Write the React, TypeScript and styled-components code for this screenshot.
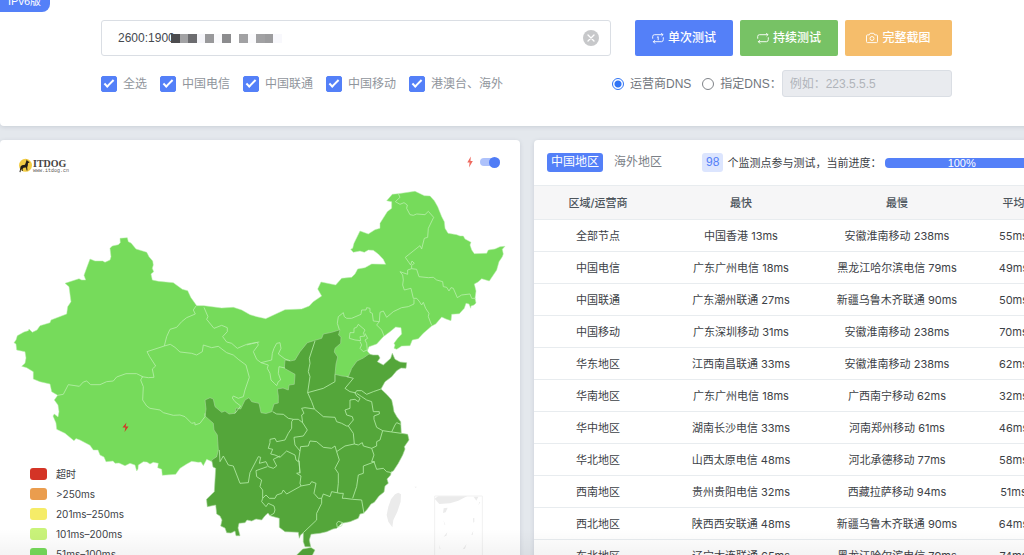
import React, { useState } from "react";
import styled, { createGlobalStyle } from "styled-components";

const GlobalStyle = createGlobalStyle`
  *, *::before, *::after { box-sizing: border-box; }
  body {
    margin: 0;
    background: #e4e8ed;
    color: #3c4146;
    font-family: "Liberation Sans", "Noto Sans CJK SC", sans-serif;
    font-size: 12px;
    line-height: 16px;
  }
  button, input { font: inherit; }
`;

const Page = styled.div`
  position: relative;
  height: 100vh;
  overflow: hidden;
`;

const Content = styled.div`
  min-width: 1053px;
  display: flex;
  flex-direction: column;
  gap: 14px;
`;

const BottomFade = styled.div`
  position: absolute;
  inset: auto 0 0 0;
  height: 26px;
  background: linear-gradient(rgba(0, 0, 0, 0), rgba(0, 0, 0, 0.045));
  pointer-events: none;
`;

const Card = styled.section`
  position: relative;
  background: #fff;
  border-radius: 4px;
  box-shadow: 0 1px 4px rgba(60, 75, 100, 0.16);
`;

const SearchCard = styled(Card)`
  border-radius: 0 0 4px 4px;
  padding: 20px 24px 29px;
`;

const VersionBadge = styled.span`
  position: absolute;
  left: 0;
  top: -8px;
  height: 20px;
  padding: 1px 9px 0 8px;
  border-radius: 0 0 8px 0;
  background: #5480f8;
  color: #fff;
  font-size: 11px;
`;

const Form = styled.form`
  max-width: 851px;
  margin: 0 auto;
  display: flex;
  flex-direction: column;
  gap: 14px;
`;

const FormRow = styled.div<{ $gap: number }>`
  display: flex;
  align-items: center;
  gap: ${(p) => p.$gap}px;
`;

const AddressField = styled.div`
  position: relative;
  flex: 1;
`;

const AddressInput = styled.input`
  display: block;
  width: 100%;
  height: 36px;
  padding: 0 40px 0 16px;
  border: 1px solid #dadee4;
  border-radius: 3px;
  color: #45494f;
  outline: none;
`;

const Mask = styled.svg`
  position: absolute;
  left: 70px;
  top: 14px;
`;

const ClearButton = styled.button`
  position: absolute;
  right: 12px;
  top: 10px;
  width: 16px;
  height: 16px;
  padding: 0;
  border: 0;
  border-radius: 50%;
  background: #c7c8ca;
  svg { display: block; }
`;

const ButtonGroup = styled.div`
  display: flex;
  gap: 7px;
`;

const ActionButton = styled.button<{ $color: string; $wide?: boolean }>`
  display: flex;
  align-items: center;
  justify-content: center;
  gap: 4px;
  width: ${(p) => (p.$wide ? 107 : 98)}px;
  height: 36px;
  padding: 0;
  border: 0;
  border-radius: 2px;
  background: ${(p) => p.$color};
  color: #fff;
  font-weight: 500;
`;

const Options = styled.div`
  flex: 1;
  display: flex;
  gap: 13px;
`;

const CheckLabel = styled.label`
  display: flex;
  align-items: center;
  gap: 6px;
  color: #90959c;
`;

const CheckBox = styled.input`
  appearance: none;
  width: 16px;
  height: 16px;
  margin: 0;
  border: 1px solid #5480f8;
  border-radius: 2px;
  display: grid;
  place-items: center;
  &:checked { background: #5480f8; }
  &:checked::before {
    content: "";
    width: 10px;
    height: 5px;
    margin-top: -3px;
    border: solid #fff;
    border-width: 0 0 2px 2px;
    transform: rotate(-45deg);
  }
`;

const DnsGroup = styled.div`
  display: flex;
  align-items: center;
  width: 340px;
`;

const RadioLabel = styled.label<{ $last?: boolean }>`
  display: flex;
  align-items: center;
  gap: 6px;
  margin-right: ${(p) => (p.$last ? 0 : 11)}px;
  color: #70757c;
  white-space: nowrap;
`;

const Radio = styled.input`
  appearance: none;
  width: 12px;
  height: 12px;
  margin: 0;
  border: 1px solid #7f8388;
  border-radius: 50%;
  &:checked {
    border-color: #3074f5;
    background: radial-gradient(circle, #3074f5 3px, #fff 4px);
  }
`;

const DnsInput = styled.input`
  flex: 1;
  min-width: 0;
  height: 27px;
  padding: 0 7px;
  border: 1px solid #dadee4;
  border-radius: 3px;
  background: #e9ebef;
  &::placeholder { color: #b0b4ba; opacity: 1; }
`;

const Columns = styled.main`
  display: grid;
  grid-template-columns: 520fr 519fr;
  column-gap: 14px;
  align-items: start;
`;

const MapSvg = styled.svg`
  display: block;
  width: 100%;
`;

const Logo = styled.svg`
  position: absolute;
  left: 18px;
  top: 16px;
`;

const MapSwitch = styled.label`
  position: absolute;
  right: 20px;
  top: 16px;
  display: flex;
  align-items: center;
  gap: 7px;
  svg { display: block; }
`;

const Switch = styled.input`
  appearance: none;
  width: 20px;
  height: 8px;
  margin: 0;
  border-radius: 4px;
  background: #d5d8dd;
  display: flex;
  align-items: center;
  &::before {
    content: "";
    width: 11px;
    height: 11px;
    flex: none;
    border-radius: 50%;
    background: #9da2aa;
  }
  &:checked {
    background: #aec2fb;
    justify-content: flex-end;
  }
  &:checked::before { background: #4f7cf6; }
`;

const Legend = styled.ul`
  position: absolute;
  left: 30px;
  top: 324px;
  margin: 0;
  padding: 0;
  list-style: none;
  font-family: Inter, "Noto Sans CJK SC", sans-serif;
  font-size: 10px;
`;

const LegendItem = styled.li<{ $color: string }>`
  display: flex;
  align-items: center;
  gap: 9px;
  height: 20px;
  &::before {
    content: "";
    width: 17px;
    height: 12px;
    border-radius: 3px;
    background: ${(p) => p.$color};
  }
`;

const PanelHead = styled.header`
  display: flex;
  align-items: center;
  height: 45px;
  padding: 0 15px 0 13px;
`;

const Tab = styled.button<{ $active?: boolean }>`
  height: 19px;
  padding: 0 4px;
  border: 0;
  border-radius: 3px;
  background: ${(p) => (p.$active ? "#5480f8" : "transparent")};
  color: ${(p) => (p.$active ? "#fff" : "#7b8087")};
  line-height: 19px;
`;

const Tabs = styled.nav`
  display: flex;
  gap: 7px;
  margin-right: 36px;
`;

const Count = styled.span`
  padding: 0 4px;
  margin-right: 4px;
  border-radius: 3px;
  background: #dce5fe;
  color: #5480f8;
  line-height: 19px;
`;

const StatusText = styled.span`
  font-size: 11px;
  white-space: nowrap;
  margin-right: 4px;
`;

const Progress = styled.div`
  flex: 1;
  height: 10px;
  border-radius: 4px;
  background: #5480f8;
  color: #fff;
  font-size: 11px;
  line-height: 10px;
  text-align: center;
`;

const Table = styled.table`
  width: 100%;
  table-layout: fixed;
  border-collapse: separate;
  border-spacing: 0;
  font-family: Inter, "Noto Sans CJK SC", sans-serif;
  font-size: 11px;
  text-align: center;
`;

const Th = styled.th<{ $width: string }>`
  width: ${(p) => p.$width};
  height: 35px;
  padding: 0;
  border: solid #e8ecef;
  border-width: 1px 0;
  background: #f6f6f7;
  color: #4d555c;
  font-weight: 500;
`;

const Td = styled.td`
  height: 32px;
  padding: 0;
  border-bottom: 1px solid #e8ecef;
  white-space: nowrap;
`;

const ISPS = ["全选", "中国电信", "中国联通", "中国移动", "港澳台、海外"];

const LEVELS = [
  ["超时", "#d43426"],
  [">250ms", "#ea9d4e"],
  ["201ms–250ms", "#f5ec68"],
  ["101ms–200ms", "#c9f37a"],
  ["51ms–100ms", "#76da5a"],
];

const COLUMNS = [
  ["区域/运营商", "128px"],
  ["最快", "158px"],
  ["最慢", "154px"],
  ["平均", "auto"],
];

const ROWS = [
  ["全部节点", "中国香港 13ms", "安徽淮南移动 238ms", "55ms"],
  ["中国电信", "广东广州电信 18ms", "黑龙江哈尔滨电信 79ms", "49ms"],
  ["中国联通", "广东潮州联通 27ms", "新疆乌鲁木齐联通 90ms", "50ms"],
  ["中国移动", "广东深圳移动 31ms", "安徽淮南移动 238ms", "70ms"],
  ["华东地区", "江西南昌联通 33ms", "安徽淮南移动 238ms", "62ms"],
  ["华南地区", "广东广州电信 18ms", "广西南宁移动 62ms", "32ms"],
  ["华中地区", "湖南长沙电信 33ms", "河南郑州移动 61ms", "46ms"],
  ["华北地区", "山西太原电信 48ms", "河北承德移动 77ms", "58ms"],
  ["西南地区", "贵州贵阳电信 32ms", "西藏拉萨移动 94ms", "51ms"],
  ["西北地区", "陕西西安联通 48ms", "新疆乌鲁木齐联通 90ms", "64ms"],
  ["东北地区", "辽宁大连联通 65ms", "黑龙江哈尔滨电信 79ms", "74ms"],
];

/* Regions answering in 51–100 ms */
const NORTH_WEST =
  "M65 283.3L72 281 79 278.7 81.7 280 85.7 280 84 275.3 87 267 90 259 95 261 102.7 261 105 262.3 110 260 111 256.7 110 248.3 112.3 246 118.3 244.7 120.3 242.7 120 238.3 127.3 237.7 128.3 241.7 131 243 133.3 245.7 136 249 141.7 250.7 146.7 252.3 149 256.7 152.7 261 153.3 265 152.3 268.3 153.7 271.7 151 274 152.3 280 158.3 281.3 173.3 282.7 182.3 289.3 187.7 290.7 190.7 297.3 196.7 305.7 204 305.7 221.7 308 233.3 307.3 241.7 310 250 314.7 256.7 316.7 265.7 318.7 285 309.7 301.7 309 309.3 306 313.3 301.7 321.7 296 317.7 289 321 282 335.7 285 341.7 278.3 351.7 277.3 355 274 357.7 269 365 267.7 371.7 264 385.7 264.3 383.3 259.3 378.3 254 373.3 250.3 368.3 250 364.3 252.3 360 251 353.3 252.3 350.7 249.3 352.7 248.3 354 243.3 360 231 368.3 234 375 229.7 380 228.3 380 223.3 387.3 211.7 391.7 208.3 391.7 201.7 386.7 200.7 392.3 194.3 398.3 193.7 415 191.3 424.3 195.7 430 196 434.3 200.7 437.7 206.7 441.7 216.7 444.3 221.7 445 228.3 448 233.3 456.7 234.7 460 236 463.3 236 465 239 471 242.3 470 245 471.7 250 474.3 253.7 486.7 253.3 488.3 250 495 249 500 246.7 505 246.3 502.3 249.3 503.3 254 502.3 256.7 499 261.7 496.7 270 489.3 281 481.7 278.7 478 282 474.3 284 476 291 475 298.3 476 303 474 305 471 306 470.7 308.3 469 304 466 303.3 464.3 308.3 459.3 313.7 451.7 314.3 451 320.7 446 319 441.7 317 435.7 324 431.7 326 423.3 333.3 418.3 338.7 412.3 340 410 345.7 401.7 346 396.7 349.3 394 348.3 395 345 394 343.3 397.7 338.3 401.7 334 401 327.7 395.7 327 390 331.7 383.3 336.7 376.7 344 369 346.7 367.3 351 370.7 355 350 380 300 390 270 430 230 440 219 453 213.3 462.3 206.7 459.3 203.3 465.7 201 462 198.3 462.3 191.7 461.3 186.7 464 180 468.3 175.7 474.3 162.3 475.3 161.7 469.3 157.7 467.7 158.3 463.3 153.3 462.3 150 464 147 462 143.3 461.7 138.3 465 138 469 136.7 471 135 465 130 463.3 125 465.7 119 463 115 463.3 113 461 106 461.7 104 457 100 455 98 450 93.3 450 90 445.3 80 440 76 438.5 74 440.7 65 433.3 56.7 429.3 56 423 53 416 54.3 414 58 417 59 411.7 58 405 54.3 400 57.7 395.3 51.7 391.7 50 384 40 381.7 33.3 379 33.3 371.7 26.7 367.7 21.7 366.3 25 363.3 26 358 25 351.7 16.7 350 16 344 14 342.7 16 340 17.3 335.7 24 332 28.3 330.7 29 329 32.3 332.3 37 330 40 325.7 50 322.7 51 320 66.7 314 67.7 306.7 71 301.7 69 286.7Z";

/* Regions answering in 50 ms or less */
const SOUTH_EAST =
  "M205 400L210 397.7 213.3 399 215 406.7 221.7 412.3 225 411 229 414 235 413.3 236 408 240.7 409 245 400 249 397.7 251.7 401.7 259 403.3 261 412.7 266 413.5 271.7 411.7 274 404 278.3 403 278.3 396 277.3 389 283 388 288.3 390 289 385 294.3 384.3 295 374.3 284.3 368.3 285 360 290 361 295 360 300 351.7 307.3 342.7 314.3 340.5 321.7 338.3 323.3 334 331.7 332.3 340 329.7 338.5 335 341 337 340.7 343.3 335 348.3 334.3 352 337.7 357 336 364 335 374.3 342 376 348.3 376.7 351.7 368.3 357 361 363.3 358 369 354 373 355 378.3 355 380 358 377.3 361.7 383.3 365 390.7 358.3 392.3 353.3 395 359.3 400 362 406.7 362.7 406 368.3 401 368 396.7 370.7 391.7 376.7 385 381.7 381 389 387.3 395 391.7 400 393 406 394 411.7 397 417 400.7 421.7 401.3 433.3 407.7 434.3 409 440 404.3 446.7 405 449 402.7 455 398.3 463.3 393.3 471 391 472 390.7 475 387 479 388.3 483.3 385 486 384 492 379 496 374.3 502.3 371 504 366.7 510 363.3 513.3 360 514 358.3 518.3 350 521.7 341.7 523.3 336.7 528.3 333 529 326.7 531.7 320 533.3 311 534.3 309.3 540 310.7 546.7 305 546.7 303.3 541.7 303.3 532.7 300.5 535 299.3 538.3 298.3 532.3 285 531.7 279.3 527.3 279.3 518.3 270 515.7 268 513 265 515.7 261.7 520 256 519 251.7 521 247 520 245 522.7 239 523.3 238 528 240 535.7 236 535.7 235 531 231 533 226.7 532.7 225 528 220.7 526 222 520 220 516 216.7 514 215.7 505 207.3 506.7 206.5 499.3 214.3 491.7 215 480 215.7 468.3 213 467 211.7 460 216.7 456.7 218.3 450 217.3 435 214 430 213.3 423.3 205 416 206 409Z";

const BORDERS = [
  {
    origin: "translate(0 300) scale(.3333)",
    d: "M588 18L580 30 586 42 560 53 545 65 530 82 510 88 500 110 493 138 441 155 449 170 467 198 457 207 462 232 445 233 425 230M173 286L190 283 205 254 238 259 250 246 260 243 272 254 300 254 320 245 340 243 350 231 378 221 410 221 428 230 422 240 430 260 428 300 440 318 450 325 480 330 490 338 520 346 540 345 555 350 575 370 585 368 585 375 600 370 615 350 615 340M493 138L511 133 525 142 540 156 575 160 590 165 607 155 610 135 635 143 655 139 680 158 700 165 715 178 738 195 748 232 735 270 730 290 715 295 700 288 697 294 705 305 722 318 705 340M612 22L624 50 620 58 642 85 665 76 682 83 682 95 668 110 680 126 695 130 712 145 740 133 755 130 778 126",
  },
  {
    origin: "translate(180 340) scale(.3333)",
    d: "M200 15L232 7 235 15 220 35 230 58 243 68 265 75 262 85 270 100 273 120 283 130 290 137 295 125 302 120 295 100 297 80 315 84M243 68L275 60 277 40 282 25 290 10 300 8 303 25 295 42 315 57 330 62M405 3L388 55 390 70 385 95 390 110 383 158 430 145 465 125 465 103M383 158L395 185 403 207 375 203 365 205 372 220 365 225 368 248M278 215L290 222 310 223 325 235 340 238 355 238 368 248 382 270 370 288 342 292 345 315 360 333 362 320 385 318 390 303 410 305 430 322 455 325 465 318 470 335 478 360 465 385 475 400 475 430 472 458M403 207L430 230 465 232 470 245 485 250 500 258 505 258 520 240 517 230 500 225 495 210 510 205 510 180 525 178 535 185 540 175 530 168 525 158 510 155 495 145 520 115 500 110M525 160L530 152 545 152 560 163 580 155 603 147M530 160L545 170 560 180 575 185 580 215 598 215 598 222 582 228 582 238 590 262 608 272 635 276 645 255 650 248 662 253M635 276L664 280M608 272L600 300 590 305 590 318 575 325 550 318 547 308 535 315 523 312 495 318 470 335M505 258L520 280 523 312M340 238L335 245 335 265 325 280 315 300 290 305 285 295 270 298 270 308 265 325 278 328 272 342 285 345 300 352 320 333 345 345 348 360 355 365 360 333M118 330L120 365 130 348 145 375 160 378 180 430 205 428 210 398 235 350 242 352 238 370 258 365 265 380 280 385 290 378 280 358 300 348M262 380L228 392 230 410 245 420 240 440 248 450 248 475 258 465 268 475 285 475 290 465 305 460 310 450 320 462 363 438 360 430 363 408 350 400 360 398 357 362M363 438L390 433 395 425 408 430 402 460 415 475 425 475 430 462 450 470 455 455 480 460 490 460 487 475 495 475 518 478 545 480 552 520M248 475L245 485 258 500 265 490 282 498 285 510 282 520 270 527M425 475L425 490 410 520 410 540 370 578M518 475L530 440 535 405 550 400 550 378 585 365M575 325L582 345 575 365 582 365 590 388 610 385 620 395 635 398M470 550L475 544 488 548 485 558 472 562ZM357 362L360 400",
  },
  {
    origin: "translate(250 180) scale(.3333)",
    d: "M445 41L450 52 436 65 450 73 462 68 472 75 470 85 480 104 490 106 500 102 525 104 535 94 551 112 535 145 533 172 523 175 515 207 510 197 466 232 482 255 486 243 493 250 485 256 485 266 500 268 507 290 535 293 550 292 560 300 578 305 580 320 590 322 597 333 603 323 610 325 622 353 635 345 660 342 665 355 678 355M485 266L473 270 473 283 450 275 458 285 460 300 458 315 463 330 483 325 490 355 500 355 507 363 515 375 520 367 527 385 537 400 535 410 545 436M492 358L492 372 475 380 455 383 430 395 410 412 400 393 390 397 388 425 380 435 395 450 402 468M388 425L370 423 367 400 360 397 360 385 350 383 348 390 335 390 333 403 305 415 290 415 283 410 280 398 265 410 262 430 268 449M315 480L298 475 300 458 312 458 312 445 320 442 325 433 345 450 340 460 345 468 330 470 332 482ZM345 460L353 475 345 480 350 490 352 510 340 515 330 505 335 495 330 485",
  },
];

function ChinaMap() {
  return (
    <MapSvg viewBox="0 140 520 470" role="img" aria-label="中国地图">
      <g stroke="#b9efac" strokeLinejoin="round">
        <path d={NORTH_WEST} fill="#76db5b" strokeWidth=".5" />
        <path d={SOUTH_EAST} fill="#54a63a" stroke="#a6d69a" strokeWidth=".6" />
        <path d="M311 547.5L315 550 312 556 304 566 296 566 292 560 296.700 555 302.700 549Z" fill="#54a63a" strokeWidth=".5" />
        {BORDERS.map((b) => (
          <path key={b.origin} transform={b.origin} d={b.d} fill="none" strokeWidth="2.400" />
        ))}
      </g>
      <g transform="translate(380 440) scale(.3333)" fill="#ebebeb">
        <path d="M45 163L55 158 63 163 62 185 52 215 40 240 37 262 25 245 20 225 25 200 33 178Z" />
        <path d="M164 176L175 168 262 168 235 182 210 190 178 192Z" />
        <path d="M281 170l14 0-6 12zM191 205l12-2-6 14-8 2zM279 235l4-1 0 12-3 2zM298 186l3 0-6 10zM190 240l6 14-2 1zM191 290l11-13-3 10zM274 284l6-12-2 13zM177 314l5 14-3-2zM248 328l12-17-5 15zM103 140l7 0-2 4z" />
        <path d="M164 490V168H307V490" fill="none" stroke="#f1f1f1" strokeWidth="3" />
      </g>
      <path d="M126.500 422.500l-4 5h3l-1 4.500 4-5.500h-3z" fill="#d43426" />
    </MapSvg>
  );
}

function ItdogLogo() {
  return (
    <Logo width="52" height="18" viewBox="0 0 52 18" role="img" aria-label="ITDOG">
      <circle cx="7.500" cy="9.300" r="6.500" fill="#f3cd45" />
      <path d="M8.800 3.500L9.600 5 11.500 5.900 11.200 6.800 10 7 9.800 9.500 9.200 11.500 9.500 14.500 8.600 14.500 8 11.500 5.500 11.800 4.600 13 4.800 15 3.900 15 3.500 13 2.800 14 2.500 16.300 1.500 16 2.200 12.500 2.600 10.500 4 9.300 7 8.800 7.900 6.200Z" fill="#221d18" />
      <text x="15" y="11" fontFamily="Liberation Serif, serif" fontWeight="bold" fontSize="10" fill="#47433f">ITDOG</text>
      <text x="15" y="16" fontFamily="Liberation Mono, monospace" fontSize="5" fill="#5f5b57">www.itdog.cn</text>
    </Logo>
  );
}

function LoopIcon({ once }: { once?: boolean }) {
  return (
    <svg width="12" height="12" viewBox="0 0 12 12" fill="none" stroke="#fff" strokeWidth=".9" strokeLinecap="round" strokeLinejoin="round">
      <path d="M.7 6.300V4.500Q.7 2.700 2.500 2.700H10.900L9.500 1.300M11.300 5.700V7.500Q11.300 9.700 9.500 9.700H1.400L2.800 11.200M10.900 2.700L9.800 3.800M1.400 9.700L2.600 8.500" />
      {once && <path d="M5.300 5.200L6.200 4.700V7.800" />}
    </svg>
  );
}

function CameraIcon() {
  return (
    <svg width="12" height="12" viewBox="0 0 12 12" fill="none" stroke="#fff" strokeWidth=".9" strokeLinejoin="round">
      <path d="M1.500 2.900H3.200L4.200 1.300H7.800L8.800 2.900H10.500Q11.500 2.900 11.500 3.900V9.600Q11.500 10.600 10.500 10.600H1.500Q.5 10.600 .5 9.600V3.900Q.5 2.900 1.500 2.900Z" />
      <circle cx="6" cy="6.500" r="2" />
    </svg>
  );
}

const MASK_BLOCKS: [number, number, string][] = [
  [0, 9, "#4c4c4f"], [9, 8, "#a2a2a4"], [17, 9, "#6c6c6f"], [26, 8, "#f5f5f9"],
  [34, 9, "#99999b"], [43, 8, "#fafafc"], [51, 9, "#8c8c8e"], [68, 9, "#a1a1a3"],
  [77, 8, "#fafafc"], [85, 9, "#a1a1a3"], [94, 8, "#9c9c9e"], [102, 9, "#f8f8fc"],
];

export default function App() {
  const [address, setAddress] = useState("2600:1900");
  return (
    <Page>
      <GlobalStyle />
      <Content>
        <SearchCard>
          <VersionBadge>IPv6版</VersionBadge>
          <Form onSubmit={(e) => e.preventDefault()}>
            <FormRow $gap={24}>
              <AddressField>
                <AddressInput aria-label="IPv6 地址" value={address} onChange={(e) => setAddress(e.target.value)} />
                <Mask width="111" height="9" aria-hidden="true">
                  {MASK_BLOCKS.map(([x, w, c]) => (
                    <rect key={x} x={x} width={w} height="9" fill={c} />
                  ))}
                </Mask>
                <ClearButton type="button" aria-label="清除" onClick={() => setAddress("")}>
                  <svg width="16" height="16" viewBox="0 0 16 16" stroke="#fff" strokeWidth="1.300" strokeLinecap="round">
                    <path d="M5 5L11 11M11 5L5 11" />
                  </svg>
                </ClearButton>
              </AddressField>
              <ButtonGroup>
                <ActionButton type="button" $color="#5480f8"><LoopIcon once />单次测试</ActionButton>
                <ActionButton type="button" $color="#77c265"><LoopIcon />持续测试</ActionButton>
                <ActionButton type="button" $color="#f5bd6b" $wide><CameraIcon />完整截图</ActionButton>
              </ButtonGroup>
            </FormRow>
            <FormRow $gap={12}>
              <Options>
                {ISPS.map((name) => (
                  <CheckLabel key={name}>
                    <CheckBox type="checkbox" defaultChecked />
                    {name}
                  </CheckLabel>
                ))}
              </Options>
              <DnsGroup>
                <RadioLabel>
                  <Radio type="radio" name="dns" defaultChecked />
                  运营商DNS
                </RadioLabel>
                <RadioLabel $last>
                  <Radio type="radio" name="dns" />
                  指定DNS：
                </RadioLabel>
                <DnsInput aria-label="指定DNS" placeholder="例如：223.5.5.5" disabled />
              </DnsGroup>
            </FormRow>
          </Form>
        </SearchCard>

        <Columns>
          <Card>
            <ChinaMap />
            <ItdogLogo />
            <MapSwitch aria-label="闪电标记">
              <svg width="6" height="12" viewBox="0 0 6 12" fill="#ee6a5f">
                <path d="M3.800 .5L.3 6.500H2.600L2 11.500 5.800 5H3.500Z" />
              </svg>
              <Switch type="checkbox" role="switch" defaultChecked />
            </MapSwitch>
            <Legend>
              {LEVELS.map(([label, color]) => (
                <LegendItem key={label} $color={color}>{label}</LegendItem>
              ))}
            </Legend>
          </Card>

          <Card>
            <PanelHead>
              <Tabs>
                <Tab type="button" $active>中国地区</Tab>
                <Tab type="button">海外地区</Tab>
              </Tabs>
              <Count>98</Count>
              <StatusText>个监测点参与测试，当前进度：</StatusText>
              <Progress role="progressbar" aria-label="当前进度" aria-valuenow={100}>100%</Progress>
            </PanelHead>
            <Table>
              <thead>
                <tr>
                  {COLUMNS.map(([title, width]) => (
                    <Th key={title} scope="col" $width={width}>{title}</Th>
                  ))}
                </tr>
              </thead>
              <tbody>
                {ROWS.map((row) => (
                  <tr key={row[0]}>
                    {row.map((cell, i) => (
                      <Td key={i}>{cell}</Td>
                    ))}
                  </tr>
                ))}
              </tbody>
            </Table>
          </Card>
        </Columns>
      </Content>
      <BottomFade />
    </Page>
  );
}
